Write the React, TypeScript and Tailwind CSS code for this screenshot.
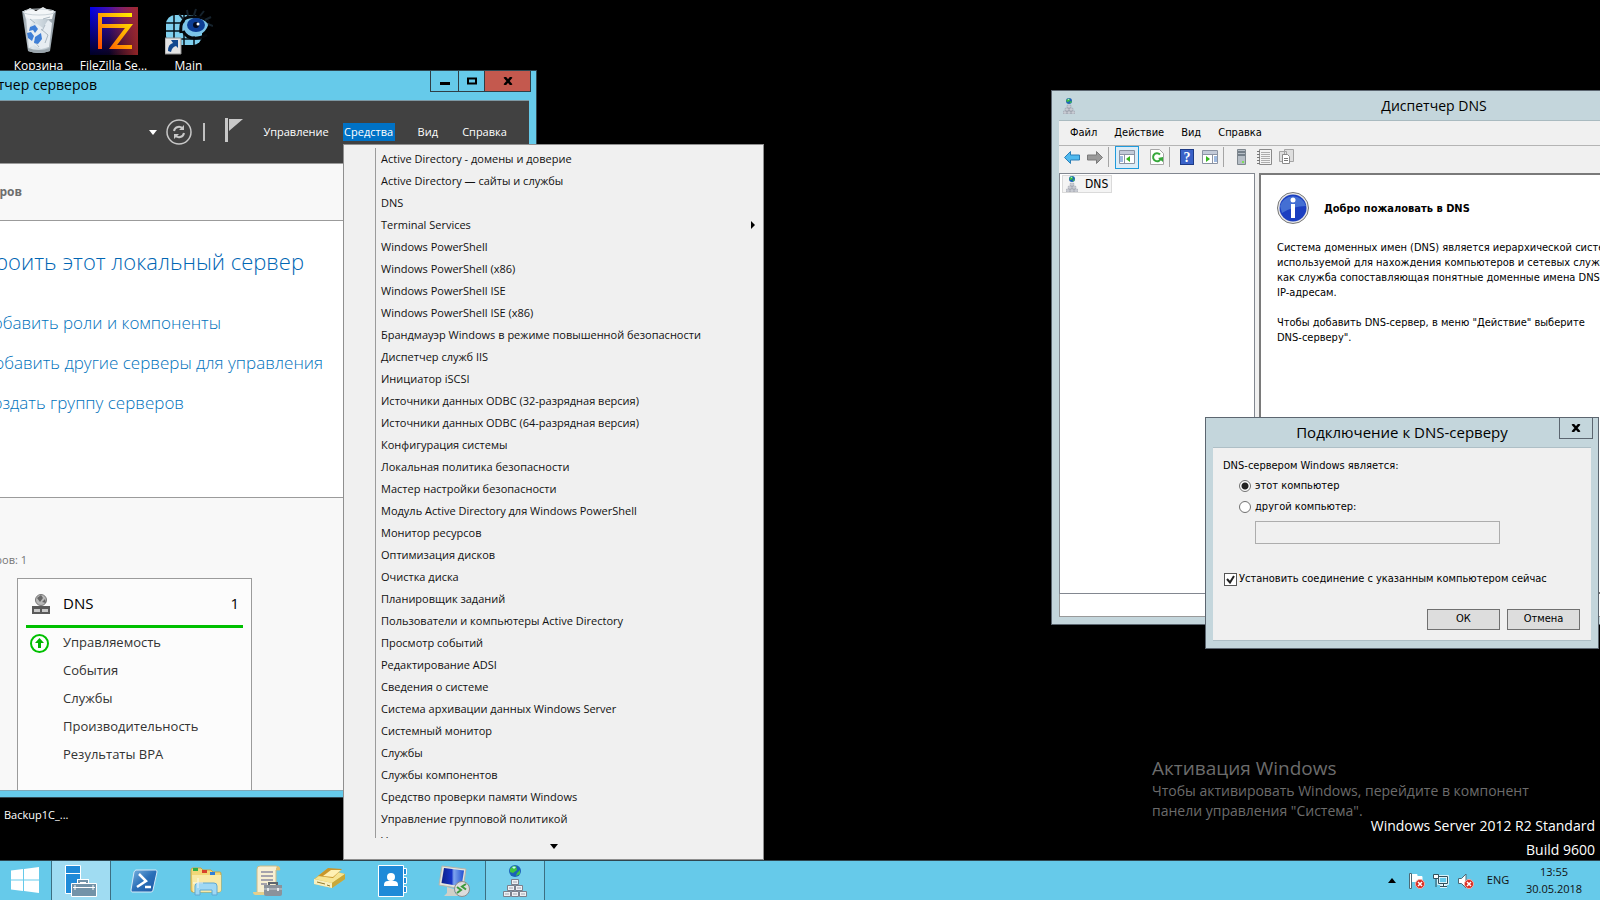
import type { ReactNode } from "react";

const toolItems = [
  "Active Directory - домены и доверие",
  "Active Directory — сайты и службы",
  "DNS",
  "Terminal Services",
  "Windows PowerShell",
  "Windows PowerShell (x86)",
  "Windows PowerShell ISE",
  "Windows PowerShell ISE (x86)",
  "Брандмауэр Windows в режиме повышенной безопасности",
  "Диспетчер служб IIS",
  "Инициатор iSCSI",
  "Источники данных ODBC (32-разрядная версия)",
  "Источники данных ODBC (64-разрядная версия)",
  "Конфигурация системы",
  "Локальная политика безопасности",
  "Мастер настройки безопасности",
  "Модуль Active Directory для Windows PowerShell",
  "Монитор ресурсов",
  "Оптимизация дисков",
  "Очистка диска",
  "Планировщик заданий",
  "Пользователи и компьютеры Active Directory",
  "Просмотр событий",
  "Редактирование ADSI",
  "Сведения о системе",
  "Система архивации данных Windows Server",
  "Системный монитор",
  "Службы",
  "Службы компонентов",
  "Средство проверки памяти Windows",
  "Управление групповой политикой",
  "Управление компьютером"
];

const roleRows = ["Управляемость", "События", "Службы", "Производительность", "Результаты BPA"];

function RecycleBinIcon() {
  return (
    <svg width="36" height="48" viewBox="0 0 36 48">
      <defs>
        <linearGradient id="bin" x1="0" x2="1">
          <stop offset="0" stopColor="#8b979f" />
          <stop offset="0.3" stopColor="#dfe7ec" />
          <stop offset="0.7" stopColor="#c3ced6" />
          <stop offset="1" stopColor="#7f8a92" />
        </linearGradient>
      </defs>
      <path d="M1 4 L35 4 L29 44 Q18 48 7 44 Z" fill="url(#bin)" />
      <path d="M3 5 L9 1 L15 4 L22 0 L27 3 L33 4 L31 12 L5 12 Z" fill="#f3f6f8" />
      <path d="M5 10 L12 14 L9 20 L16 17 L22 21 L27 13 L31 16 L28 40 L20 42 L13 38 L8 41 Z" fill="#e7edf2" />
      <path d="M20 22 L27 28 L24 36 M9 12 L14 16 M22 12 L29 10 M13 34 L18 40 M24 18 L21 24" stroke="#aab7c1" fill="none" />
      <ellipse cx="18" cy="5" rx="16" ry="3" fill="none" stroke="#c9d2d8" />
      <path d="M7 44 Q18 48 29 44 L29 41 Q18 45 7 41 Z" fill="#9aa5ac" />
      <path d="M9 20 l5 -2 l3 4 l-3 4 l-2 -3 l-4 1 Z M6 26 l4 -1 l3 4 l-2 5 l-4 -3 Z M14 30 l6 -4 l1 6 l-4 5 l-4 -1 Z" fill="#3f7fd6" />
    </svg>
  );
}

function FileZillaIcon() {
  return (
    <svg width="48" height="48" viewBox="0 0 48 48">
      <defs>
        <linearGradient id="fzTop" x1="0" x2="1">
          <stop offset="0" stopColor="#0000f0" />
          <stop offset="0.5" stopColor="#5a14a0" />
          <stop offset="1" stopColor="#9c2a7a" />
        </linearGradient>
        <linearGradient id="fzShade" x1="0" y1="0" x2="0" y2="1">
          <stop offset="0" stopColor="#000020" stopOpacity="0" />
          <stop offset="1" stopColor="#000010" stopOpacity="0.9" />
        </linearGradient>
        <linearGradient id="fzEdge" x1="0" x2="1">
          <stop offset="0.4" stopColor="#a02828" stopOpacity="0" />
          <stop offset="1" stopColor="#a02828" stopOpacity="0.9" />
        </linearGradient>
        <linearGradient id="fzMark" x1="0" y1="1" x2="1" y2="0">
          <stop offset="0" stopColor="#ff4a00" />
          <stop offset="0.5" stopColor="#ffa000" />
          <stop offset="1" stopColor="#ffee00" />
        </linearGradient>
      </defs>
      <path d="M0 0h48v48H0z" fill="url(#fzTop)" />
      <path d="M0 0h48v48H0z" fill="url(#fzShade)" />
      <path d="M0 0h48v48H0z" fill="url(#fzEdge)" />
      <path d="M42 8H10V42M12 19H39L23 40H42" fill="none" stroke="url(#fzMark)" strokeWidth="4" />
    </svg>
  );
}

function MainShortcutIcon() {
  return (
    <svg width="48" height="48" viewBox="0 0 48 48">
      <rect x="1" y="8" width="36" height="30" rx="9" fill="#7fd0ee" />
      <path d="M9 8v30M19 8v30M29 8v30M1 16h36M1 24h36M1 32h36" stroke="#061018" strokeWidth="1.5" />
      <path d="M15 22 Q21 6 44 14 Q42 30 22 30 Z" fill="#7cc4e8" />
      <path d="M16 26 Q14 8 30 10 Q40 10 44 16 M18 24 Q24 36 42 28" fill="none" stroke="#05070a" strokeWidth="3" />
      <path d="M18 12l-4-5M23 9l-1-6M29 8l2-6M35 9l4-5M40 13l6-3M43 17l5 2" stroke="#15222c" strokeWidth="2" />
      <ellipse cx="31" cy="18" rx="9" ry="7" fill="#0c3d94" />
      <circle cx="31" cy="18" r="3" fill="#020a20" />
      <circle cx="33" cy="17" r="1.5" fill="#fff" />
      <path d="M0 31h16v16H0z" fill="#e4e4e4" stroke="#8f8f8f" />
      <path d="M3 44 Q3 37 8 36 L6 33 H13 V41 L11 39 Q7 40 6 45 Z" fill="#12488f" />
    </svg>
  );
}

function ServerTreeIcon({ className }: { className: string }) {
  return (
    <svg className={className} viewBox="0 0 24 32">
      <circle cx="12" cy="6" r="6" fill="#1c62b8" />
      <path d="M7 4 Q10 0 13 1 L14 5 L10 8 L7 7Z M14 8 L17 5 L17 9 L13 11Z" fill="#3fc43f" />
      <path d="M9 2 Q11 1 13 2 L11 4Z" fill="#c6f2ff" />
      <g fill="#eef0f4" stroke="#7b7f8c">
        <path d="M8.500 14.500h7v5h-7zM4.500 20.500h7v5h-7zM12.500 20.500h7v5h-7zM.5 26.500h7v5h-7zM8.500 26.500h7v5h-7zM16.500 26.500h7v5h-7z" />
      </g>
      <path d="M10 17h4M6 23h4M14 23h4M2 29h4M10 29h4M18 29h4" stroke="#a2a6b2" />
    </svg>
  );
}

function DesktopIcon({ label, children }: { label: string; children: ReactNode }) {
  return (
    <button className="flex w-[75px] flex-col items-center text-white">
      <span className="flex h-[55px] items-end justify-center">{children}</span>
      <span className="text-[12px] leading-[22px] whitespace-nowrap">{label}</span>
    </button>
  );
}

function ManagerLink({ children }: { children: ReactNode }) {
  return (
    <a href="#" className="flex h-10 items-center justify-end text-[17px] font-light whitespace-nowrap text-[#0072bc]">
      {children}
    </a>
  );
}

function ServerManager() {
  return (
    <section className="absolute top-[70px] left-0 flex h-[728px] w-[537px] flex-col border border-l-0 border-[#2f4650] bg-[#66caea]">
      <header className="flex h-[29px] shrink-0 items-start justify-between pr-[5px]">
        <h1 className="flex w-[97px] justify-end text-[14px] leading-7 whitespace-nowrap text-black">тчер серверов</h1>
        <div className="flex h-[21px] border border-t-0 border-[#2f3e46]">
          <button aria-label="Свернуть" className="flex w-7 items-center justify-center border-r border-[#2f3e46]">
            <svg width="10" height="10"><path d="M0 6h10v3H0z" /></svg>
          </button>
          <button aria-label="Развернуть" className="flex w-[26px] items-center justify-center border-r border-[#2f3e46]">
            <svg width="10" height="8"><path d="M1 1.500h8v5H1z" fill="none" stroke="#000" strokeWidth="2" /></svg>
          </button>
          <button aria-label="Закрыть" className="flex w-[45px] items-center justify-center bg-[#c4594e]">
            <svg width="10" height="8"><path d="M1.500 0l7 8M8.500 0l-7 8" stroke="#000" strokeWidth="2.500" /></svg>
          </button>
        </div>
      </header>
      <div className="mr-[7px] flex min-h-0 flex-1 flex-col border-t border-[#7d98a3] bg-[#f8f8f8]">
        <nav className="flex h-[62px] shrink-0 items-center justify-end bg-[#414141] pr-[21px] text-[11px] text-white">
          <button aria-label="Список" className="mr-[9px]"><svg width="8" height="5"><path d="M0 0h8L4 5z" fill="#fff" /></svg></button>
          <button aria-label="Обновить" className="mr-[11px]">
            <svg width="26" height="26" viewBox="0 0 26 26" fill="none" stroke="#c8c8c8">
              <circle cx="13" cy="13" r="12" strokeWidth="1.500" />
              <path d="M8 12a5 5 0 0 1 9-2M18 14a5 5 0 0 1-9 2" strokeWidth="2" />
              <path d="M18 6v5h-5zM8 20v-5h5z" fill="#c8c8c8" stroke="none" />
            </svg>
          </button>
          <span className="mr-5 h-[18px] w-[2px] bg-[#c0c0c0]" />
          <button aria-label="Уведомления" className="mr-[20px] -mt-1">
            <svg width="18" height="24"><path d="M0 0h3v24H0zM4 1h14L4 13z" fill="#c8c8c8" /></svg>
          </button>
          <button className="mr-[13px] w-[67px] text-center">Управление</button>
          <button className="mr-[23px] h-[18px] w-[52px] bg-[#0072c6] text-center leading-[18px]">Средства</button>
          <button className="mr-[23px]">Вид</button>
          <button className="w-[47px] text-center">Справка</button>
        </nav>
        <div className="flex h-[58px] shrink-0 items-center border-t border-b border-[#9b9b9b]">
          <h2 className="flex w-[22px] justify-end text-[12px] font-bold whitespace-nowrap text-[#6e6e6e]">ров</h2>
        </div>
        <div className="h-[276px] shrink-0 bg-white pt-5">
          <h3 className="flex h-10 w-[304px] items-center justify-end text-[22px] font-light whitespace-nowrap text-[#0066b4]">
            роить этот локальный сервер
          </h3>
          <div className="w-[221px] pt-[22px]"><ManagerLink>обавить роли и компоненты</ManagerLink></div>
          <div className="w-[323px]"><ManagerLink>обавить другие серверы для управления</ManagerLink></div>
          <div className="w-[184px]"><ManagerLink>оздать группу серверов</ManagerLink></div>
        </div>
        <div className="flex min-h-0 flex-1 flex-col overflow-hidden border-t border-[#9b9b9b]">
          <p className="mt-[52px] mb-[8px] flex w-[27px] justify-end text-[11px] leading-5 whitespace-nowrap text-[#767676]">
            ров: 1
          </p>
          <article className="ml-[17px] flex w-[235px] flex-1 flex-col border border-b-0 border-[#9b9b9b] bg-[#fcfcfc] px-2">
            <div className="flex h-[49px] shrink-0 items-center border-b-3 border-[#00c000] pt-[3px] pr-[4px] pl-[6px] text-[15px] text-black">
              <svg width="18" height="20" className="mr-[13px]">
                <circle cx="9" cy="6" r="5.500" fill="#b9b9b9" stroke="#777" />
                <path d="M5 4l4-3 2 3-3 4zM10 8l3-3 1 4z" fill="#666" />
                <path d="M0 12h18v8H0z" fill="#5a5a5a" />
                <path d="M2 15h6v3H2zM10 15h6v3h-6z" fill="#c9c9c9" />
              </svg>
              <span className="flex-1">DNS</span>
              <span>1</span>
            </div>
            <ul className="pt-px text-[13px] text-[#333]">
              {roleRows.map((row, index) => (
                <li key={row} className="flex h-7 items-center">
                  <span className="flex w-[37px] pl-1">
                    {index === 0 && (
                      <svg width="19" height="19" viewBox="0 0 19 19">
                        <circle cx="9.500" cy="9.500" r="8.500" fill="#fff" stroke="#00c000" strokeWidth="2" />
                        <path d="M9.500 4l4.500 5h-3v5H8V9H5z" fill="#00b400" />
                      </svg>
                    )}
                  </span>
                  {row}
                </li>
              ))}
            </ul>
          </article>
        </div>
      </div>
      <div className="mr-[7px] h-[7px] shrink-0 border-t border-[#7fa9b8]" />
    </section>
  );
}

function ToolsMenu() {
  return (
    <div className="absolute top-[144px] left-[343px] flex h-[716px] w-[421px] flex-col border border-[#8f8f8f] bg-[#f0f0f0]">
      <ul role="menu" className="mt-[3px] ml-[31px] h-[690px] overflow-hidden border-l border-[#9b9b9b] text-[11px] text-[#111]">
        {toolItems.map((item) => (
          <li key={item} role="none">
            <button role="menuitem" className="flex h-[22px] w-full items-center justify-between pr-2 pl-[5px] text-left whitespace-nowrap">
              {item}
              {item === "Terminal Services" && <svg width="4" height="8"><path d="M0 0v8l4-4z" /></svg>}
            </button>
          </li>
        ))}
      </ul>
      <button aria-label="Прокрутить вниз" className="flex flex-1 items-center justify-center pb-1">
        <svg width="8" height="5"><path d="M0 0h8L4 5z" /></svg>
      </button>
    </div>
  );
}

function PaneIcon({ flip }: { flip?: boolean }) {
  return (
    <svg width="16" height="14" viewBox="0 0 16 14">
      <path d="M.5 .5h15v13H.5z" fill="#fff" stroke="#8b93a3" />
      <path d="M1 1h14v3H1z" fill="#c3cad8" />
      <path d="M1 4.500h14" stroke="#8b93a3" />
      {flip ? (
        <>
          <path d="M10.500 5v8" stroke="#8b93a3" />
          <path d="M12 7h3M12 9h3M12 11h3" stroke="#3f74c2" />
          <path d="M4 6v6l4-3z" fill="#35b51e" />
        </>
      ) : (
        <>
          <path d="M5.500 5v8" stroke="#8b93a3" />
          <path d="M1 7h3M1 9h3M1 11h3" stroke="#3f74c2" />
          <path d="M11 6v6L7 9z" fill="#35b51e" />
        </>
      )}
    </svg>
  );
}

function DnsToolbar() {
  return (
    <div className="flex h-[28px] shrink-0 items-center border-t border-[#b4b4b4] pb-[5px] pl-[5px]">
      <button aria-label="Назад">
        <svg width="16" height="13"><path d="M.5 6.500l6-6v3.500h9v5h-9v3.500z" fill="#4fb9ee" stroke="#2a7fb8" /></svg>
      </button>
      <button aria-label="Вперед" className="ml-[7px]">
        <svg width="16" height="13"><path d="M15.500 6.500l-6-6v3.500h-9v5h9v3.500z" fill="#9a9a9a" stroke="#7a7a7a" /></svg>
      </button>
      <span className="mx-[5px] h-5 w-px bg-[#a5a5a5]" />
      <button aria-label="Дерево консоли" className="ml-px flex h-[23px] w-6 items-center justify-center border border-[#1f9bdc] bg-[#dcecf7]">
        <PaneIcon />
      </button>
      <button aria-label="Обновить" className="ml-[11px]">
        <svg width="14" height="16">
          <path d="M.5 .5h9l4 4v11H.5z" fill="#fff" stroke="#a7a7a7" />
          <path d="M10 5.500A4 4 0 1 0 11 9" fill="none" stroke="#35a83a" strokeWidth="2" />
          <path d="M8 9l5 4V8z" fill="#35a83a" />
        </svg>
      </button>
      <span className="mx-[5px] h-5 w-px bg-[#a5a5a5]" />
      <button aria-label="Справка" className="ml-[5px] flex h-4 w-[14px] items-center justify-center border border-[#1d3a86] bg-[#3a62c8] font-['Liberation_Serif',serif] text-[14px] font-bold text-white">
        ?
      </button>
      <button aria-label="Область действий" className="ml-2"><PaneIcon flip /></button>
      <span className="mx-[5px] h-5 w-px bg-[#a5a5a5]" />
      <button aria-label="Сервер" className="ml-[8px]">
        <svg width="9" height="16">
          <path d="M.5 .5h8v15h-8z" fill="#b6bec6" stroke="#7f878e" />
          <path d="M1 3h7M1 6h7" stroke="#33414d" />
          <path d="M5 12h2v2H5z" fill="#7de05a" />
        </svg>
      </button>
      <button aria-label="Список" className="ml-[11px]">
        <svg width="15" height="16">
          <path d="M2.500 .5h12v15h-12z" fill="#f3f3f3" stroke="#8a8a8a" />
          <path d="M4 3.500h9M4 5.500h9M4 7.500h9M4 9.500h9M4 11.500h9M4 13.500h9" stroke="#adadad" />
          <path d="M0 2.500h3M0 5.500h3M0 8.500h3M0 11.500h3M0 14.500h3" stroke="#777" />
        </svg>
      </button>
      <button aria-label="Копировать" className="ml-[7px]">
        <svg width="15" height="16">
          <path d="M5.500 .5h9v12h-9zM.5 2.500h7v10h-7z" fill="#dedede" stroke="#a5a5a5" />
          <path d="M3.500 5.500h5l2 2v7h-7z" fill="#fff" stroke="#8a8a8a" />
          <path d="M5 9.500h4M5 11.500h4" stroke="#777" />
        </svg>
      </button>
    </div>
  );
}

function DnsManager() {
  return (
    <section className="absolute top-[90px] left-[1051px] flex h-[535px] w-[768px] flex-col border border-[#5c6670] bg-[#c4d6dc] px-[7px] pb-[7px] font-['DejaVu_Sans_Condensed','DejaVu_Sans',sans-serif]">
      <header className="flex h-[29px] shrink-0 items-center pl-[4px]">
        <ServerTreeIcon className="h-4 w-3" />
        <h1 className="flex-1 pr-[18px] text-center font-['Open_Sans',sans-serif] text-[14px] text-black">Диспетчер DNS</h1>
      </header>
      <div className="flex min-h-0 flex-1 flex-col border-t border-[#a9bac0] bg-[#f0f0f0]">
        <nav className="flex h-[24px] shrink-0 items-center gap-[17px] pl-[11px] text-[11px]">
          <button>Файл</button>
          <button>Действие</button>
          <button>Вид</button>
          <button>Справка</button>
        </nav>
        <DnsToolbar />
        <div className="flex min-h-0 flex-1 gap-1">
          <div className="w-[196px] shrink-0 border border-[#828790] bg-white p-[1px] pl-[2px]">
            <button className="flex h-[18px] w-[50px] items-center border border-[#dadada] bg-[#f4f4f4] pl-[3px] text-[12px]">
              <ServerTreeIcon className="mr-[7px] h-4 w-3" />
              DNS
            </button>
          </div>
          <article className="min-w-0 flex-1 border-2 border-[#7a7a7a] bg-white pt-[17px] pl-4 text-[11px] leading-[15px] text-black">
            <div className="flex items-center gap-[15px]">
              <svg width="32" height="32" viewBox="0 0 32 32">
                <circle cx="16" cy="16" r="15.500" fill="#e8e8e8" stroke="#777" />
                <circle cx="16" cy="16" r="13.500" fill="#1c3fc0" />
                <path d="M3 14A13.500 13.500 0 0 1 29 14Q16 14 5 21Z" fill="#5684dc" opacity="0.7" />
                <circle cx="16" cy="8" r="2.500" fill="#fff" />
                <path d="M14 12h4v14h-4z" fill="#fff" />
              </svg>
              <h2 className="font-bold">Добро пожаловать в DNS</h2>
            </div>
            <p className="mt-[16px]">
              Система доменных имен (DNS) является иерархической системой,
              <br />
              используемой для нахождения компьютеров и сетевых служб,
              <br />
              как служба сопоставляющая понятные доменные имена DNS
              <br />
              IP-адресам.
            </p>
            <p className="mt-[15px]">
              Чтобы добавить DNS-сервер, в меню "Действие" выберите
              <br />
              DNS-серверу".
            </p>
          </article>
        </div>
        <div className="h-[23px] shrink-0 border-b border-l border-[#9a9a9a] bg-white" />
      </div>
    </section>
  );
}

function ConnectDialog() {
  return (
    <form
      onSubmit={(e) => e.preventDefault()}
      className="absolute top-[417px] left-[1205px] flex h-[232px] w-[394px] flex-col border border-[#5c6670] bg-[#c4d6dc] px-[7px] pb-[7px] font-['DejaVu_Sans_Condensed','DejaVu_Sans',sans-serif] text-[11px] text-black"
    >
      <header className="flex h-[29px] shrink-0 items-start justify-end">
        <h2 className="flex-1 pl-[32px] text-center font-['Open_Sans',sans-serif] text-[15px] leading-7">Подключение к DNS-серверу</h2>
        <button type="button" aria-label="Закрыть" className="-mr-[2px] flex h-[21px] w-[34px] items-center justify-center border border-t-0 border-[#5c6670]">
          <svg width="10" height="8"><path d="M1.500 0l7 8M8.500 0l-7 8" stroke="#000" strokeWidth="2.500" /></svg>
        </button>
      </header>
      <div className="flex flex-1 flex-col border-y border-[#aebfc6] bg-[#f0f0f0] pt-[8px] pr-[11px] pl-[10px]">
        <p className="leading-5">DNS-сервером Windows является:</p>
        <label className="flex h-5 items-center gap-1 pl-4">
          <input type="radio" name="target" defaultChecked className="m-0 h-3 w-3 appearance-none rounded-full border border-[#707070] bg-[radial-gradient(circle,#222_0_3px,#fff_4px)]" />
          этот компьютер
        </label>
        <label className="flex h-[22px] items-center gap-1 pl-4">
          <input type="radio" name="target" className="m-0 h-3 w-3 appearance-none rounded-full border border-[#707070] bg-white" />
          другой компьютер:
        </label>
        <input aria-label="другой компьютер" disabled className="mt-[3px] ml-8 h-[23px] w-[245px] border border-[#adadad] bg-[#f0f0f0]" />
        <label className="relative mt-[25px] flex h-5 items-center gap-[2px] whitespace-nowrap">
          <input type="checkbox" defaultChecked className="peer ml-px h-[13px] w-[13px] appearance-none border border-[#555] bg-white" />
          <svg width="9" height="9" className="absolute left-[3px] hidden peer-checked:block"><path d="M1 4l3 3.500L8 1" fill="none" stroke="#222" strokeWidth="2" /></svg>
          Установить соединение с указанным компьютером сейчас
        </label>
        <div className="mt-[20px] flex justify-end gap-[7px]">
          <button className="h-[21px] w-[73px] border border-[#707070] bg-[#ddd]">ОК</button>
          <button type="button" className="h-[21px] w-[73px] border border-[#707070] bg-[#ddd]">Отмена</button>
        </div>
      </div>
    </form>
  );
}

function PowerShellIcon() {
  return (
    <svg width="28" height="24" viewBox="0 0 28 24">
      <defs>
        <linearGradient id="ps" x1="0" y1="0" x2="1" y2="1">
          <stop offset="0" stopColor="#7ab3e0" />
          <stop offset="0.5" stopColor="#2a6fb8" />
          <stop offset="1" stopColor="#1f57a4" />
        </linearGradient>
      </defs>
      <path d="M6 1h20q1 0 1 2l-4 18q0 2-2 2H2q-1 0-1-2L4 3q1-2 2-2z" fill="url(#ps)" stroke="#d5e9f7" />
      <path d="M9 5l7 7-9 6M15 18h6" fill="none" stroke="#fff" strokeWidth="2.500" />
    </svg>
  );
}

function ExplorerIcon() {
  return (
    <svg width="32" height="30" viewBox="0 0 32 30">
      <path d="M1 4q0-2 2-2h8l2 2h8l2 2h7q1 0 1 2v16q0 2-2 2H3q-2 0-2-2z" fill="#f2d778" stroke="#c9a545" />
      <path d="M2 9h29v15q0 2-2 2H3z" fill="#f9e9a6" />
      <path d="M3 2h5v3H3z" fill="#2fae46" />
      <path d="M12 4h5v3h-5z" fill="#d8412c" />
      <path d="M20 6h5v3h-5z" fill="#2f7fd8" />
      <path d="M5 29v-9q0-3 3-3h16q3 0 3 3v9h-5v-5H10v5z" fill="#9fd8f4" stroke="#5fa8d2" />
      <path d="M8 12v10M3 17h10" stroke="#fff" strokeOpacity="0.8" />
    </svg>
  );
}

function ScriptIcon() {
  return (
    <svg width="30" height="32" viewBox="0 0 30 32">
      <path d="M7 1h16q4 0 4 4h-4v23H4V4q0-3 3-3z" fill="#f7efd2" stroke="#cdbb86" />
      <path d="M23 5V3q2-3 4 0v2z" fill="#e0c070" />
      <path d="M0 27h18q1 3 3 3H3q-3 0-3-3z" fill="#e6cf8c" />
      <path d="M8 7h12M8 11h12M8 15h12M8 19h6" stroke="#8a8aa0" strokeWidth="1.500" />
      <path d="M11 20h18v9q0 2-2 2H13q-2 0-2-2z" fill="#8b929a" />
      <path d="M16 20v-2h8v2" fill="none" stroke="#5e656d" strokeWidth="2" />
      <path d="M11 24h18" stroke="#c9ced3" />
      <path d="M14 23h2v3h-2zM24 23h2v3h-2z" fill="#e5e8ea" />
    </svg>
  );
}

function StorageIcon() {
  return (
    <svg width="32" height="24" viewBox="0 0 32 24">
      <path d="M0 12L13 2l18 5v5L18 21 0 17z" fill="#d9bb4c" />
      <path d="M1 12L13 3l18 4-13 9z" fill="#f6e594" />
      <path d="M4 9L14 1l14 1-9 9z" fill="#c9962a" />
      <path d="M9 9l8-6 10 0-8 7z" fill="#fff1b4" />
      <path d="M0 12l18 4v5L0 17z" fill="#f8efc0" />
      <path d="M18 16L31 7v5l-13 9z" fill="#c8a83a" />
      <path d="M3 15l8 2M13 18l3 1" stroke="#917a2a" />
    </svg>
  );
}

function ContactsIcon() {
  return (
    <svg width="29" height="32" viewBox="0 0 29 32">
      <path d="M.5 .5h25v31H.5z" fill="#1f8ad8" stroke="#fff" />
      <path d="M26 3.500h2.500v6H26M26 12.500h2.500v6H26M26 21.500h2.500v6H26" fill="#1f8ad8" stroke="#fff" />
      <circle cx="13" cy="12" r="4" fill="#fff" />
      <path d="M6 21v-1q0-4 4-4h6q4 0 4 4v1z" fill="#fff" />
    </svg>
  );
}

function RemoteDesktopIcon() {
  return (
    <svg width="32" height="32" viewBox="0 0 32 32">
      <defs>
        <linearGradient id="rdp" x1="0" x2="1">
          <stop offset="0" stopColor="#0b1f8a" />
          <stop offset="0.45" stopColor="#1735c8" />
          <stop offset="0.55" stopColor="#7fa5ee" />
          <stop offset="1" stopColor="#2050d0" />
        </linearGradient>
      </defs>
      <path d="M4 1l24 3-3 20-24-4z" fill="#e4e4dc" stroke="#b5b5ad" />
      <path d="M6 3l20 2.500-2.500 16L3.500 18z" fill="url(#rdp)" />
      <path d="M9 22l7 2 1 4 4 3H6l3-3z" fill="#d0d0c8" />
      <circle cx="24" cy="24" r="7.500" fill="#dcdcdc" stroke="#8c8c8c" />
      <path d="M19 22l4 3-4 3M28 19l-4 2.500 4 3" fill="none" stroke="#3c9a3c" strokeWidth="2" />
    </svg>
  );
}

function ErrorBadge() {
  return (
    <>
      <circle cx="11" cy="11" r="4.500" fill="#d8281e" stroke="#f3b0a8" />
      <path d="M9 9l4 4M13 9l-4 4" stroke="#fff" strokeWidth="1.500" />
    </>
  );
}

function Taskbar() {
  return (
    <footer className="flex h-10 shrink-0 items-stretch border-t border-[#2f4650] bg-[#66caea]">
      <button aria-label="Пуск" className="flex w-[51px] items-center justify-center pr-[2px] pb-[2px]">
        <svg width="28" height="26" viewBox="0 0 28 26" fill="#fff">
          <path d="M0 3.500L12 2v10.500H0zM13 2L28 0v12.500H13zM0 13.500h12V24L0 22.500zM13 13.500h15V26l-15-2z" />
        </svg>
      </button>
      <button aria-label="Диспетчер серверов" className="flex w-[60px] items-center justify-center border-x border-[#3c6f82] bg-[#a0dcf2]">
        <svg width="32" height="32" viewBox="0 0 32 32">
          <path d="M.5 .5h15v28H.5z" fill="#1f8ad8" stroke="#fff" />
          <path d="M1 8.500h14" stroke="#fff" />
          <path d="M14 18v-2h8v2" fill="none" stroke="#fff" strokeWidth="4" />
          <path d="M6.500 18.500h25v13h-25z" fill="#7393a8" stroke="#fff" />
          <path d="M14 18v-2h8v2" fill="none" stroke="#7393a8" strokeWidth="2" />
          <path d="M8 22.500h22M10 20v5M28 20v5" stroke="#fff" />
        </svg>
      </button>
      <div className="flex w-[374px] items-stretch pl-[2px]">
        <button aria-label="Windows PowerShell" className="flex flex-1 items-center justify-center"><PowerShellIcon /></button>
        <button aria-label="Проводник" className="flex flex-1 items-center justify-center"><ExplorerIcon /></button>
        <button aria-label="Сценарии" className="flex flex-1 items-center justify-center"><ScriptIcon /></button>
        <button aria-label="Хранилище" className="flex flex-1 items-center justify-center pb-1"><StorageIcon /></button>
        <button aria-label="Контакты" className="flex flex-1 items-center justify-center"><ContactsIcon /></button>
        <button aria-label="Удаленный рабочий стол" className="flex flex-1 items-center justify-center"><RemoteDesktopIcon /></button>
      </div>
      <button aria-label="DNS" className="flex w-[60px] items-center justify-center border-x border-[#3c6f82] bg-[#77d0ec]">
        <ServerTreeIcon className="h-8 w-6" />
      </button>
      <div className="ml-auto flex items-center pr-[17px] text-[11px] text-[#111]">
        <button aria-label="Скрытые значки" className="mr-[13px]"><svg width="8" height="5"><path d="M0 5h8L4 0z" /></svg></button>
        <svg width="16" height="16" className="mr-2">
          <path d="M1.500 0v16M3 1.500h5v2h5v7H8v-2H3z" fill="#fff" stroke="#fff" />
          <path d="M.5 .5h2v15h-2z" fill="#fff" stroke="#4d6a76" />
          <ErrorBadge />
        </svg>
        <svg width="16" height="16" className="mr-[9px]" fill="none">
          <path d="M5.500 3.500h9v7h-9zM7 13.500h7M10.500 11v2" stroke="#fff" strokeWidth="2.500" />
          <path d="M5.500 3.500h9v7h-9zM7 13.500h7M10.500 11v2" stroke="#33505c" />
          <path d="M.5 1.500h5v4h-5zM3 6v8" fill="#fff" stroke="#33505c" />
        </svg>
        <svg width="16" height="16" className="mr-[12px]">
          <path d="M.5 5.500h3L8 1v14l-4.500-4.500h-3z" fill="#fff" stroke="#4d6a76" />
          <ErrorBadge />
        </svg>
        <button className="mr-[15px] w-6 text-center">ENG</button>
        <button className="w-[58px] pb-px text-center leading-[17px] whitespace-nowrap">13:55<br />30.05.2018</button>
      </div>
    </footer>
  );
}

export default function App() {
  return (
    <div className="flex h-screen flex-col overflow-hidden bg-black font-['Open_Sans','Noto_Sans',sans-serif]">
      <main className="relative min-h-0 flex-1 overflow-hidden">
        <div className="flex pl-px">
          <DesktopIcon label="Корзина"><RecycleBinIcon /></DesktopIcon>
          <DesktopIcon label="FileZilla Se..."><FileZillaIcon /></DesktopIcon>
          <DesktopIcon label="Main"><MainShortcutIcon /></DesktopIcon>
        </div>
        <button className="absolute top-[805px] left-[4px] text-[11px] leading-5 text-white">Backup1C_...</button>
        <div className="absolute top-[756px] left-[1152px] text-[14px] leading-5 whitespace-nowrap text-[#6c6c6c]">
          <p className="text-[19px] leading-6">Активация Windows</p>
          <p className="pt-px">Чтобы активировать Windows, перейдите в компонент</p>
          <p>панели управления "Система".</p>
        </div>
        <div className="absolute top-[814px] right-[5px] text-right text-[14px] leading-6 text-white">
          <p>Windows Server 2012 R2 Standard</p>
          <p>Build 9600</p>
        </div>
        <ServerManager />
        <ToolsMenu />
        <DnsManager />
        <ConnectDialog />
      </main>
      <Taskbar />
    </div>
  );
}
